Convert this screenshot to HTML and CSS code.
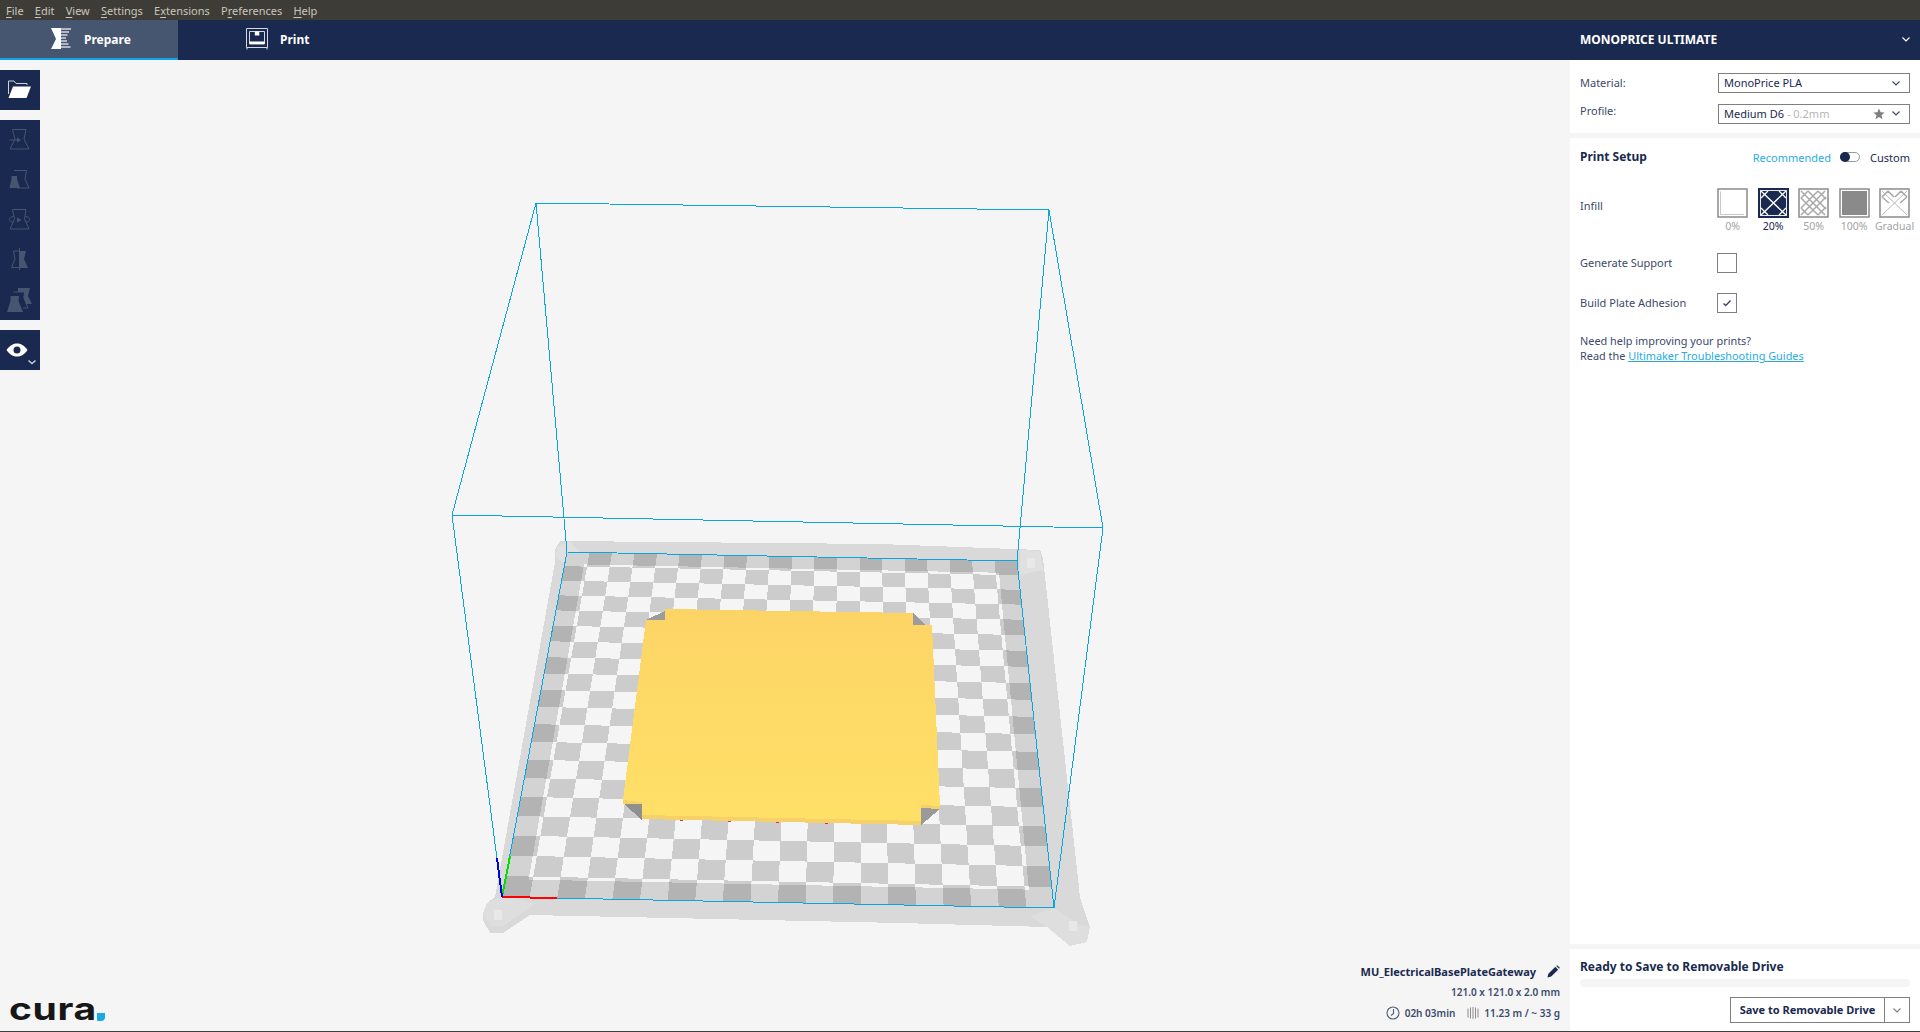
FILE: index.html
```html
<!DOCTYPE html>
<html lang="en">
<head>
    <meta charset="UTF-8">
    <title>Cura</title>
    <link rel="stylesheet" href="styles.css">
</head>
<body>
    <nav class="menubar">
        <span><u>F</u>ile</span>
        <span><u>E</u>dit</span>
        <span><u>V</u>iew</span>
        <span><u>S</u>ettings</span>
        <span>E<u>x</u>tensions</span>
        <span>P<u>r</u>eferences</span>
        <span><u>H</u>elp</span>
    </nav>

    <header class="topbar">
        <div class="tab tab-active">
            <svg class="tab-icon" viewBox="0 0 20 22">
                <path class="fill-white" d="M0 0H10V21H0L5 11Z"/>
                <path class="stripe" d="M10 1H20M10 4H18M10 7H16.500M10 10H15M10 13H16M10 16H17.500M10 19H19.500"/>
            </svg>
            <span>Prepare</span>
        </div>
        <div class="tab tab-print">
            <svg class="tab-icon" viewBox="0 0 22 22">
                <path class="outline" d="M0.500 0.500H21.500V19.500H0.500ZM1 19.500V21.500M21 19.500V21.500"/>
                <path class="outline" d="M3.500 3.500H18.500V16H3.500Z"/>
                <rect class="fill-white" x="3.500" y="13.500" width="15" height="2.500"/>
                <rect class="fill-white" x="8.800" y="3.500" width="4.500" height="4"/>
            </svg>
            <span>Print</span>
        </div>
        <div class="machine">
            <span>MONOPRICE ULTIMATE</span>
            <svg class="chevron chevron-white" viewBox="0 0 8 5"><path d="M0.500 0.500L4 4L7.500 0.500"/></svg>
        </div>
    </header>

    <div class="main">
        <section class="viewport">
            <svg id="scene" class="scene" viewBox="0 60 1570 971"></svg>

            <div class="tools">
                <div class="tool-group">
                    <div class="tool">
                        <svg viewBox="0 0 40 40">
                            <path class="folder-back" d="M8.500 24V11H14L16 13.500H27V15"/>
                            <path class="fill-white" d="M13 16.500H31L26.500 28H8.500Z"/>
                        </svg>
                    </div>
                </div>
                <div class="tool-group">
                    <div class="tool">
                        <svg viewBox="0 0 40 40">
                            <path class="icon-line" d="M12.500 9.500H26L24 19L29 29H10L15 19Z"/>
                            <path class="icon-line" d="M9.500 20H19"/>
                            <path class="icon-fill" d="M17 17.500L21 20L17 22.500Z"/>
                        </svg>
                    </div>
                    <div class="tool">
                        <svg viewBox="0 0 40 40">
                            <path class="icon-line" d="M14 10.500H26.500L25 19L29 28H17"/>
                            <path class="icon-fill" d="M11.500 16H17V19L20 28H9.500L11.500 19Z"/>
                        </svg>
                    </div>
                    <div class="tool">
                        <svg viewBox="0 0 40 40">
                            <path class="icon-line" d="M12.500 9.500H26L24.500 19L29 29H10L14.500 19Z"/>
                            <path class="icon-line" d="M13.500 16.500C8 16.500 8 22 13 22M25.500 16.500C31 16.500 31 22 26 22"/>
                            <path class="icon-fill" d="M17 17.500L21.500 20L17 22.500Z"/>
                        </svg>
                    </div>
                    <div class="tool">
                        <svg viewBox="0 0 40 40">
                            <path class="icon-line" d="M19.500 8V30M19.500 11H13.500L15 19L11.500 27.500H19.500"/>
                            <path class="icon-fill" d="M19.500 11H26L24 19L28 28H19.500Z"/>
                        </svg>
                    </div>
                    <div class="tool">
                        <svg viewBox="0 0 40 40">
                            <path class="icon-fill" d="M18 8H30L28 16L32 24H26L23.500 17L24 12H18Z"/>
                            <path class="icon-line" d="M13 12H25L24 18L28 28H23"/>
                            <path class="icon-fill" d="M10.500 16H19L18.500 21L23 32H7L10.500 21Z"/>
                        </svg>
                    </div>
                </div>
                <div class="tool-group">
                    <div class="tool">
                        <svg viewBox="0 0 40 40">
                            <path class="fill-white" fill-rule="evenodd" d="M6.500 20C10 15 13.500 13.500 17 13.500C20.500 13.500 24 15 27.500 20C24 25 20.500 26.500 17 26.500C13.500 26.500 10 25 6.500 20ZM17 16.500A3.500 3.500 0 1 0 17 23.500A3.500 3.500 0 1 0 17 16.500Z"/>
                            <path class="chev-small" d="M28.500 30.500L32 33.500L35.500 30.500"/>
                        </svg>
                    </div>
                </div>
            </div>

            <div class="logo"><span>cura</span><i></i></div>

            <div class="job-info">
                <div class="job-name">
                    <span>MU_ElectricalBasePlateGateway</span>
                    <svg class="pencil" viewBox="0 0 14 14">
                        <path d="M0.500 13.500L1.500 9.500L9 2L12 5L4.500 12.500Z"/>
                        <path d="M10 1L11 0.200L13.800 3L13 4Z"/>
                    </svg>
                </div>
                <div class="job-size">121.0 x 121.0 x 2.0 mm</div>
                <div class="job-stats">
                    <svg class="stat-icon" viewBox="0 0 14 14">
                        <circle cx="7" cy="7" r="6" />
                        <path d="M7.500 3V7.500L5 9.500"/>
                    </svg>
                    <span>02h 03min</span>
                    <svg class="stat-icon stat-spool" viewBox="0 0 12 14">
                        <path d="M1 2.500V11.500M3.500 1.500V12.500M6 1V13M8.500 1.500V12.500M11 2.500V11.500"/>
                    </svg>
                    <span>11.23 m / ~ 33 g</span>
                </div>
            </div>
        </section>

        <aside class="sidebar">
            <div class="panel panel-material">
                <div class="form-row">
                    <label>Material:</label>
                    <div class="select">
                        <span>MonoPrice PLA</span>
                        <svg class="chevron" viewBox="0 0 8 5"><path d="M0.500 0.500L4 4L7.500 0.500"/></svg>
                    </div>
                </div>
                <div class="form-row form-row-profile">
                    <label>Profile:</label>
                    <div class="select">
                        <span>Medium D6 <em>- 0.2mm</em></span>
                        <svg class="star" viewBox="0 0 12 12"><path d="M6 0.500L7.600 4.300L11.600 4.600L8.500 7.200L9.500 11.300L6 9.100L2.500 11.300L3.500 7.200L0.400 4.600L4.400 4.300Z"/></svg>
                        <svg class="chevron" viewBox="0 0 8 5"><path d="M0.500 0.500L4 4L7.500 0.500"/></svg>
                    </div>
                </div>
            </div>

            <div class="panel panel-setup">
                <div class="setup-head">
                    <h2>Print Setup</h2>
                    <span class="mode-on">Recommended</span>
                    <span class="toggle"></span>
                    <span>Custom</span>
                </div>

                <div class="infill-row">
                    <span class="setting-label">Infill</span>
                    <div class="infill-options">
                        <div class="infill">
                            <svg viewBox="0 0 31 30">
                                <rect class="box" x="1" y="1" width="29" height="28"/>
                                <path class="hatch-light" d="M3.500 3.500V26.500H27"/>
                            </svg>
                            <span>0%</span>
                        </div>
                        <div class="infill infill-active">
                            <svg viewBox="0 0 31 30">
                                <rect class="navy" x="0" y="0" width="31" height="30"/>
                                <path class="hatch-white" d="M3 3L28 27M28 3L3 27M3 10L10 3M21 3L28 10M3 20L10 27M21 27L28 20"/>
                                <rect class="inner-white" x="2.500" y="2.500" width="26" height="25"/>
                            </svg>
                            <span>20%</span>
                        </div>
                        <div class="infill">
                            <svg viewBox="0 0 31 30">
                                <rect class="box" x="1" y="1" width="29" height="28"/>
                                <path class="hatch" d="M3 10L10 3M3 20L20 3M3 27L27 3M10 27L28 9M20 27L28 19M3 10L20 27M3 20L10 27M3 3L27 27M10 3L28 21M20 3L28 11"/>
                            </svg>
                            <span>50%</span>
                        </div>
                        <div class="infill">
                            <svg viewBox="0 0 31 30">
                                <rect class="box" x="1" y="1" width="29" height="28"/>
                                <rect class="solid" x="3" y="3" width="25" height="24"/>
                            </svg>
                            <span>100%</span>
                        </div>
                        <div class="infill">
                            <svg viewBox="0 0 31 30">
                                <rect class="box" x="1" y="1" width="29" height="28"/>
                                <path class="hatch-thin" d="M3 3L28 27M28 3L3 27"/>
                                <path class="hatch" d="M3 9L9 3M3 9L10 15M9 3L15 9M22 3L28 9M22 3L16 9M28 9L21 15"/>
                            </svg>
                            <span>Gradual</span>
                        </div>
                    </div>
                </div>

                <div class="check-row">
                    <span class="setting-label">Generate Support</span>
                    <span class="checkbox"></span>
                </div>
                <div class="check-row">
                    <span class="setting-label">Build Plate Adhesion</span>
                    <span class="checkbox">
                        <svg viewBox="0 0 10 8"><path d="M1.500 4.500L3.800 6.500L8.500 1.500"/></svg>
                    </span>
                </div>

                <p class="help">Need help improving your prints?<br>Read the <a href="#">Ultimaker Troubleshooting Guides</a></p>
            </div>

            <div class="panel panel-save">
                <h3>Ready to Save to Removable Drive</h3>
                <div class="progress"></div>
                <div class="save-row">
                    <div class="save-button">
                        <span>Save to Removable Drive</span>
                        <div class="save-more">
                            <svg class="chevron chevron-gray" viewBox="0 0 8 5"><path d="M0.500 0.500L4 4L7.500 0.500"/></svg>
                        </div>
                    </div>
                </div>
            </div>
        </aside>
    </div>

    <script src="scene.js"></script>
</body>
</html>
```

FILE: styles.css
```css
* {
    box-sizing: border-box;
}
body {
    margin: 0;
    height: 1032px;
    overflow: hidden;
    display: flex;
    flex-direction: column;
    background: #f5f5f5;
    color: #19294f;
    font-family: 'Noto Sans', sans-serif;
    font-size: 12px;
    border-bottom: 1px solid #3f3f3f;
}

/* menu bar */
.menubar {
    height: 20px;
    flex: none;
    display: flex;
    gap: 11.2px;
    padding-left: 6px;
    align-items: center;
    background: #3e3c37;
    color: #c9c6bd;
    font-size: 11px;
}
.menubar u {
    text-underline-offset: 2px;
}

/* top bar */
.topbar {
    height: 40px;
    flex: none;
    display: flex;
    background: #19294f;
    color: white;
    font-weight: 700;
}
.tab {
    width: 178px;
    display: flex;
    align-items: center;
}
.tab-active {
    padding-left: 51px;
    gap: 13px;
    background: #465570;
    border-bottom: 2px solid #0ea5e4;
}
.tab-print {
    padding-left: 68px;
    gap: 12px;
    padding-bottom: 2px;
}
.tab-icon {
    width: 20px;
    height: 22px;
    flex: none;
}
.tab-print .tab-icon {
    width: 22px;
}
.fill-white {
    fill: white;
}
.stripe {
    stroke: #d5d8df;
    stroke-width: 1.4;
    fill: none;
}
.outline {
    stroke: #d5d8df;
    stroke-width: 1;
    fill: none;
}
.machine {
    margin-left: auto;
    width: 350px;
    padding: 0 10px 2px;
    display: flex;
    align-items: center;
    justify-content: space-between;
}

/* chevrons */
.chevron {
    width: 8px;
    height: 5px;
    fill: none;
    stroke: #3b4a6b;
    stroke-width: 1.2;
    flex: none;
}
.chevron-white {
    stroke: white;
}
.chevron-gray {
    stroke: #7f7f7f;
}

/* 3d view */
.main {
    flex: 1;
    display: flex;
    min-height: 0;
}
.viewport {
    flex: 1;
    position: relative;
}
.scene {
    position: absolute;
    left: 0;
    top: 0;
    width: 1570px;
    height: 971px;
}
.tools {
    position: relative;
    width: 40px;
    padding-top: 10px;
    display: flex;
    flex-direction: column;
    gap: 10px;
}
.tool-group {
    background: #19294f;
}
.tool {
    width: 40px;
    height: 40px;
}
.tool svg {
    display: block;
    width: 40px;
    height: 40px;
}
.folder-back {
    fill: none;
    stroke: #cfd3dc;
    stroke-width: 1;
}
.icon-line {
    fill: none;
    stroke: #465570;
    stroke-width: 1;
}
.icon-fill {
    fill: #465570;
}
.chev-small {
    fill: none;
    stroke: #c5c9d3;
    stroke-width: 1.6;
}

/* logo */
.logo {
    position: absolute;
    left: 9px;
    bottom: 2px;
    height: 40px;
    font-family: 'Inter', sans-serif;
    font-size: 31px;
    line-height: 40px;
    font-weight: 700;
    color: #17171a;
}
.logo span {
    display: block;
    transform: scaleX(1.26);
    transform-origin: left center;
    letter-spacing: 0.5px;
}
.logo i {
    position: absolute;
    left: 88px;
    bottom: 8px;
    width: 8px;
    height: 8px;
    border-radius: 0 0 4px 1px;
    background: #1ba9e6;
}

/* job info */
.job-info {
    position: absolute;
    right: 10px;
    bottom: 9px;
    display: flex;
    flex-direction: column;
    align-items: flex-end;
    font-size: 10px;
    font-weight: 600;
}
.job-name {
    display: flex;
    align-items: center;
    gap: 11px;
    font-size: 11px;
    font-weight: 700;
    height: 20px;
}
.pencil {
    width: 13px;
    height: 13px;
    fill: #19294f;
}
.job-size {
    color: #3b4a6b;
    line-height: 22px;
}
.job-stats {
    display: flex;
    align-items: center;
    height: 19px;
    color: #3b4a6b;
    gap: 5px;
}
.stat-icon {
    width: 14px;
    height: 14px;
    fill: none;
    stroke: #4f5c7a;
    stroke-width: 1.1;
}
.stat-spool {
    width: 12px;
    margin-left: 7px;
    stroke: #8d8d8d;
    stroke-width: 1;
}

/* sidebar */
.sidebar {
    width: 350px;
    flex: none;
    display: flex;
    flex-direction: column;
    gap: 5px;
    font-size: 11px;
}
.panel {
    background: white;
}
.panel-material {
    height: 73px;
    padding: 13px 10px 0;
    display: flex;
    flex-direction: column;
    gap: 10px;
}
.form-row {
    display: flex;
    justify-content: space-between;
    align-items: center;
    color: #3b4a6b;
}
.form-row label {
    padding-bottom: 2px;
}
.form-row-profile label {
    padding-bottom: 6px;
}
.select {
    width: 192px;
    height: 20px;
    padding: 0 9px 0 5px;
    display: flex;
    align-items: center;
    gap: 7px;
    border: 1px solid #7f7f7f;
    color: #19294f;
}
.select span {
    flex: 1;
    padding-bottom: 1px;
}
.select em {
    font-style: normal;
    color: #b5b5b5;
}
.star {
    width: 12px;
    height: 12px;
    fill: #7f7f7f;
}
.panel-setup {
    flex: 1;
    padding: 0 10px;
}
.setup-head {
    height: 36px;
    display: flex;
    align-items: center;
    padding-top: 2px;
}
.setup-head h2 {
    margin: 0 auto 1px 0;
    font-size: 12px;
    font-weight: 700;
}
.mode-on {
    color: #29abe2;
}
.toggle {
    position: relative;
    width: 20px;
    height: 10px;
    margin: 0 10px 0 9px;
    border: 1px solid #9a9a9a;
    border-radius: 5px;
}
.toggle::before {
    content: "";
    position: absolute;
    left: -1px;
    top: -1px;
    width: 10px;
    height: 10px;
    border-radius: 50%;
    background: #19294f;
}
.infill-row {
    display: flex;
    align-items: flex-start;
    padding-top: 14px;
    height: 69px;
}
.setting-label {
    width: 137px;
    flex: none;
    color: #3b4a6b;
}
.check-row .setting-label {
    padding-bottom: 2px;
}
.infill-row .setting-label {
    padding-top: 10px;
}
.infill-options {
    display: flex;
    width: 206px;
    gap: 9.500px;
}
.infill {
    width: 31px;
    display: flex;
    flex-direction: column;
    align-items: center;
    font-size: 10.5px;
    line-height: 14px;
    color: #a3a3a3;
    white-space: nowrap;
}
.infill svg {
    width: 31px;
    height: 30px;
    margin-bottom: 1px;
}
.infill-active {
    color: #19294f;
}
.box {
    fill: white;
    stroke: #8a8a8a;
    stroke-width: 1.5;
}
.navy {
    fill: #19294f;
}
.inner-white {
    fill: none;
    stroke: #e8e8ea;
    stroke-width: 1;
}
.hatch-white {
    fill: none;
    stroke: white;
    stroke-width: 1.3;
}
.hatch {
    fill: none;
    stroke: #a8a8a8;
    stroke-width: 1.5;
}
.hatch-thin {
    fill: none;
    stroke: #b8b8b8;
    stroke-width: 1;
}
.hatch-light {
    fill: none;
    stroke: #c9c9c9;
    stroke-width: 1;
}
.solid {
    fill: #8a8a8a;
}
.check-row {
    height: 40px;
    display: flex;
    align-items: center;
}
.checkbox {
    width: 20px;
    height: 20px;
    display: flex;
    align-items: center;
    justify-content: center;
    border: 1px solid #7f7f7f;
}
.checkbox svg {
    width: 10px;
    height: 8px;
    fill: none;
    stroke: #3b4a6b;
    stroke-width: 1.5;
}
.help {
    margin: 10px 0 0;
    font-size: 10.9px;
    line-height: 15px;
    color: #3b4a6b;
}
.help a {
    color: #29abe2;
}
.panel-save {
    height: 82px;
    padding: 9px 10px 0;
}
.panel-save h3 {
    margin: 0;
    font-size: 12px;
    line-height: 18px;
    font-weight: 700;
}
.progress {
    height: 8px;
    margin-top: 3px;
    border-radius: 4px;
    background: #f5f5f5;
}
.save-row {
    margin-top: 10px;
    display: flex;
    justify-content: flex-end;
}
.save-button {
    display: flex;
    align-items: center;
    height: 26px;
    border: 1px solid #7f7f7f;
    font-weight: 700;
}
.save-button span {
    width: 153px;
    padding-bottom: 2px;
    text-align: center;
}
.save-more {
    width: 25px;
    height: 100%;
    display: flex;
    align-items: center;
    justify-content: center;
    border-left: 1px solid #7f7f7f;
}
```

FILE: scene.js
```js
// draws the build plate and the model into the svg, all in page pixels
const svg = document.getElementById("scene");
const NS = "http://www.w3.org/2000/svg";

function poly(points, fill) {
    const el = document.createElementNS(NS, "polygon");
    el.setAttribute("points", points.map(p => p.join(",")).join(" "));
    el.setAttribute("fill", fill);
    el.setAttribute("shape-rendering", "crispEdges");
    svg.appendChild(el);
    return el;
}

function line(a, b, color, width) {
    const el = document.createElementNS(NS, "line");
    el.setAttribute("x1", a[0]);
    el.setAttribute("y1", a[1]);
    el.setAttribute("x2", b[0]);
    el.setAttribute("y2", b[1]);
    el.setAttribute("stroke", color);
    el.setAttribute("stroke-width", width);
    el.setAttribute("shape-rendering", "crispEdges");
    svg.appendChild(el);
}

// corners of the bed on screen
const BL = [567, 552], BR = [1017, 561], FR = [1054, 908], FL = [502, 897];

// unit square to quad
function makeProjection(p0, p1, p2, p3) {
    const dx1 = p1[0] - p2[0], dx2 = p3[0] - p2[0], sx = p0[0] - p1[0] + p2[0] - p3[0];
    const dy1 = p1[1] - p2[1], dy2 = p3[1] - p2[1], sy = p0[1] - p1[1] + p2[1] - p3[1];
    const den = dx1 * dy2 - dx2 * dy1;
    const g = (sx * dy2 - dx2 * sy) / den;
    const h = (dx1 * sy - sx * dy1) / den;
    const a = p1[0] - p0[0] + g * p1[0], b = p3[0] - p0[0] + h * p3[0], c = p0[0];
    const d = p1[1] - p0[1] + g * p1[1], e = p3[1] - p0[1] + h * p3[1], f = p0[1];
    return (u, v) => {
        const w = g * u + h * v + 1;
        return [(a * u + b * v + c) / w, (d * u + e * v + f) / w];
    };
}

const project = makeProjection(BL, BR, FR, FL);
const CELLS = 20;

// bed frame and feet
poly([[560, 541], [880, 544], [1040, 550], [1043, 558], [1080, 897], [1090, 927], [1087, 942], [1070, 946], [1047, 927], [900, 923], [670, 918], [530, 915], [503, 933], [490, 933], [483, 920], [483, 913], [487, 903], [495, 897], [555, 562], [555, 550]], "#d9d9d9");
poly([[483, 913], [487, 903], [502, 897], [520, 899], [535, 904], [503, 926], [490, 926]], "#dedede");
poly([[1054, 908], [1080, 925], [1090, 927], [1087, 942], [1070, 946], [1047, 927], [1030, 916]], "#dedede");
poly([[557, 547], [570, 541], [580, 552], [567, 565], [556, 558]], "#e0e0e0");
poly([[1020, 550], [1040, 551], [1043, 570], [1020, 575]], "#e0e0e0");

// screw holes in the corners
[[494, 910], [1069, 921], [1027, 558]].forEach(p => {
    poly([p, [p[0] + 8, p[1]], [p[0] + 8, p[1] + 10], [p[0], p[1] + 10]], "#e8e8e8");
});

// checker
for (let j = 0; j < CELLS; j++) {
    for (let i = 0; i < CELLS; i++) {
        const u0 = i / CELLS, u1 = (i + 1) / CELLS, v0 = j / CELLS, v1 = (j + 1) / CELLS;
        const odd = (i + j) % 2 === 1;
        poly([project(u0, v0), project(u1, v0), project(u1, v1), project(u0, v1)], odd ? "#cccccc" : "#f5f5f5");
    }
}

// outer ring of the plate is darker and slightly narrower than a cell
const RING = 0.85 / CELLS;
for (let k = 0; k < CELLS; k++) {
    const a = k / CELLS, b = (k + 1) / CELLS;
    const color = k % 2 === 1 ? "#b3b3b3" : "#d3d3d3";
    const flip = (CELLS - 1 + k) % 2 === 1 ? "#b3b3b3" : "#d3d3d3";
    poly([project(a, 0), project(b, 0), project(b, RING), project(a, RING)], color);
    poly([project(0, a), project(RING, a), project(RING, b), project(0, b)], color);
    poly([project(a, 1 - RING), project(b, 1 - RING), project(b, 1), project(a, 1)], flip);
    poly([project(1 - RING, a), project(1, a), project(1, b), project(1 - RING, b)], flip);
}

// model
const defs = document.createElementNS(NS, "defs");
defs.innerHTML = '<linearGradient id="modelTop" gradientUnits="userSpaceOnUse" x1="0" y1="609" x2="0" y2="820"><stop offset="0" stop-color="#fcd466"/><stop offset="1" stop-color="#ffe067"/></linearGradient>';
svg.appendChild(defs);

poly([[646, 620], [665, 611], [665, 620]], "#9c9c9c");
poly([[913, 613], [926, 625], [913, 625]], "#9c9c9c");
poly([[623, 803], [642, 803], [642, 820]], "#8f8f8f");
poly([[921, 807], [940, 809], [921, 825]], "#9a9a9a");
poly([[642, 815], [921, 821], [921, 825], [642, 819]], "#f6d169");
poly([[623, 800], [642, 802], [642, 804], [623, 804]], "#f6d169");
poly([[921, 805], [940, 806], [940, 809], [921, 808]], "#f6d169");
poly([[665, 609], [913, 613], [913, 625], [932, 625], [940, 806], [921, 805], [921, 821], [642, 815], [642, 802], [623, 800], [646, 620], [665, 620]], "url(#modelTop)");
[[680, 820], [728, 821], [776, 822], [825, 823]].forEach(p => {
    poly([p, [p[0] + 3, p[1]], [p[0] + 3, p[1] + 1], [p[0], p[1] + 1]], "#e63030");
});

// build volume
const BOX = "#06a6e2";
const volumeTop = [[536, 203], [1049, 210], [1103, 528], [452, 515]];
const volumeBottom = [BL, BR, FR, FL];
for (let i = 0; i < 4; i++) {
    line(volumeTop[i], volumeTop[(i + 1) % 4], BOX, 1);
    line(volumeBottom[i], volumeBottom[(i + 1) % 4], BOX, 1);
    line(volumeTop[i], volumeBottom[i], BOX, 1);
}

// axes
line(FL, [557, 898], "#ff0000", 2);
line(FL, [510, 856], "#00e000", 2);
line(FL, [497, 858], "#0000e6", 2);
```
